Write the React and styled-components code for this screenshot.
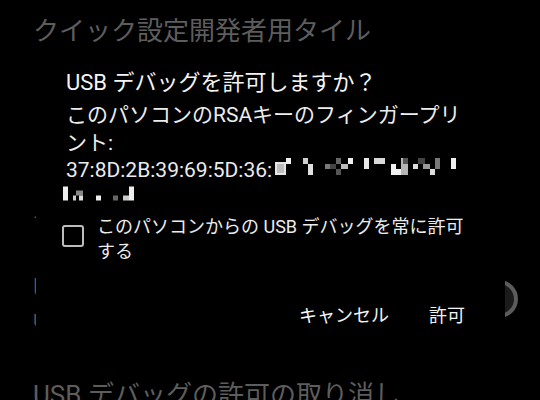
import React from "react";
import styled, { createGlobalStyle } from "styled-components";

const GlobalStyle = createGlobalStyle`
  html, body {
    margin: 0;
    padding: 0;
    background: #000;
  }
  body {
    font-family: "Roboto", "Noto Sans CJK JP", sans-serif;
    -webkit-font-smoothing: antialiased;
  }
`;

const Screen = styled.div`
  position: relative;
  width: 540px;
  height: 400px;
  overflow: hidden;
  background: #000;
`;

const SettingsList = styled.div`
  display: flex;
  flex-direction: column;
  margin-top: -8px;
  padding: 0 22px 0 33px;
`;

const SettingRow = styled.div`
  display: flex;
  align-items: center;
  justify-content: space-between;
  padding: 22px 0;
`;

const RowText = styled.div`
  display: flex;
  flex-direction: column;
  gap: 3px;
`;

const RowTitle = styled.div`
  font-size: 26px;
  line-height: 34px;
  color: #5d5d5d;
  white-space: nowrap;
`;

const RowSummary = styled.div`
  font-size: 19px;
  line-height: 26px;
  color: #555;
  white-space: nowrap;
`;

const CategoryTitle = styled.div`
  padding: 30px 0 15.6px;
  font-size: 19px;
  line-height: 26px;
  color: #4f5a66;
  white-space: nowrap;
`;

const ToggleThumb = styled.div`
  flex: none;
  width: 38px;
  height: 38px;
  margin-top: -6px;
  box-sizing: border-box;
  border-radius: 50%;
  border: 4px solid #5c5c5c;
  background: #1b1b1b;
`;

const Dialog = styled.div`
  position: absolute;
  left: 36px;
  top: 45px;
  width: 469px;
  box-sizing: border-box;
  padding: 24px 28px 12px 30px;
  background: #000;
  display: flex;
  flex-direction: column;
`;

const DialogTitle = styled.div`
  font-size: 22px;
  line-height: 28px;
  font-weight: 400;
  color: #f4f4f4;
`;

const Message = styled.div`
  margin-top: 5px;
  font-size: 21px;
  line-height: 27.5px;
  color: #ececec;
`;

const FingerprintLine = styled.div`
  display: flex;
  align-items: flex-start;
  height: 27.5px;
`;

const Mosaic = styled.svg`
  display: block;
  flex: none;
  margin-left: ${(p) => p.$offset || 0}px;
`;

const CheckRow = styled.label`
  display: flex;
  align-items: flex-start;
  gap: 13px;
  margin-top: 2px;
  margin-left: -4px;
`;

const CheckBox = styled.span`
  flex: none;
  width: 22px;
  height: 22px;
  margin-top: 11px;
  box-sizing: border-box;
  border: 2.5px solid #bcbcbc;
  border-radius: 3px;
`;

const CheckText = styled.span`
  font-size: 18px;
  line-height: 25px;
  color: #ececec;
`;

const ButtonBar = styled.div`
  display: flex;
  justify-content: flex-end;
  gap: 16px;
  margin-top: 34px;
`;

const TextButton = styled.button`
  height: 36px;
  padding: 0 12px;
  border: none;
  background: transparent;
  font-family: "Roboto", "Noto Sans CJK JP", sans-serif;
  font-size: 18px;
  line-height: 36px;
  font-weight: 400;
  color: #f4f4f4;
`;

const line3 = [
  [277, 162, 11, 13, "#e6e6e6"],
  [279, 164, 7, 9, "#bdbdbd"],
  [288, 158, 5, 6, "#f0f0f0"],
  [305, 158, 5, 6, "#cfcfcf"],
  [310, 164, 5, 11, "#e0e0e0"],
  [327, 164, 5, 5, "#7a7a7a"],
  [332, 164, 6, 5, "#444"],
  [338, 158, 5, 6, "#666"],
  [343, 164, 7, 5, "#bbb"],
  [338, 169, 5, 6, "#555"],
  [350, 158, 5, 6, "#f0f0f0"],
  [366, 158, 5, 11, "#e8e8e8"],
  [376, 158, 11, 6, "#d8d8d8"],
  [393, 164, 5, 11, "#f0f0f0"],
  [398, 169, 5, 6, "#f0f0f0"],
  [403, 158, 7, 17, "#b5b5b5"],
  [405, 158, 5, 6, "#555"],
  [415, 164, 5, 5, "#ddd"],
  [420, 158, 7, 6, "#444"],
  [425, 164, 7, 5, "#999"],
  [432, 169, 5, 6, "#ddd"],
  [437, 158, 5, 11, "#777"],
  [453, 158, 5, 11, "#f0f0f0"],
];

const line4 = [
  [63, 186, 5, 14, "#eee"],
  [73, 195, 3, 5, "#ccc"],
  [76, 190, 7, 5, "#888"],
  [79, 195, 4, 5, "#ddd"],
  [96, 195, 5, 5, "#eee"],
  [113, 195, 5, 5, "#666"],
  [123, 195, 6, 5, "#ccc"],
  [129, 186, 5, 14, "#eee"],
];

function MosaicBlock({ cells, originX, originY, width, offset }) {
  return (
    <Mosaic $offset={offset} width={width} height={27.5} viewBox={`0 0 ${width} 27.5`}>
      {cells.map(([x, y, w, h, c], i) => (
        <rect key={i} x={x - originX} y={y - originY} width={w} height={h} fill={c} />
      ))}
    </Mosaic>
  );
}

export default function App() {
  return (
    <>
      <GlobalStyle />
      <Screen>
        <SettingsList>
          <SettingRow>
            <RowText>
              <RowTitle>クイック設定開発者用タイル</RowTitle>
            </RowText>
          </SettingRow>
          <SettingRow>
            <RowText>
              <RowTitle>：ステム トレース</RowTitle>
              <RowSummary>：パフォーマンスの問題を分析</RowSummary>
            </RowText>
          </SettingRow>
          <CategoryTitle>デバッグ</CategoryTitle>
          <SettingRow>
            <RowText>
              <RowTitle>USB デバッグ</RowTitle>
              <RowSummary>USB 接続時はデバッグモードにする</RowSummary>
            </RowText>
            <ToggleThumb />
          </SettingRow>
          <SettingRow>
            <RowText>
              <RowTitle>USB デバッグの許可の取り消し</RowTitle>
            </RowText>
          </SettingRow>
        </SettingsList>

        <Dialog role="dialog">
          <DialogTitle>USB デバッグを許可しますか？</DialogTitle>
          <Message>
            <div>このパソコンのRSAキーのフィンガープリント:</div>
            <FingerprintLine>
              <span>37:8D:2B:39:69:5D:36:</span>
              <MosaicBlock cells={line3} originX={274} originY={157} width={190} offset={0} />
            </FingerprintLine>
            <FingerprintLine>
              <MosaicBlock cells={line4} originX={62} originY={184.5} width={80} offset={-4} />
            </FingerprintLine>
          </Message>
          <CheckRow>
            <CheckBox />
            <CheckText>このパソコンからの USB デバッグを常に許可する</CheckText>
          </CheckRow>
          <ButtonBar>
            <TextButton>キャンセル</TextButton>
            <TextButton>許可</TextButton>
          </ButtonBar>
        </Dialog>
      </Screen>
    </>
  );
}
